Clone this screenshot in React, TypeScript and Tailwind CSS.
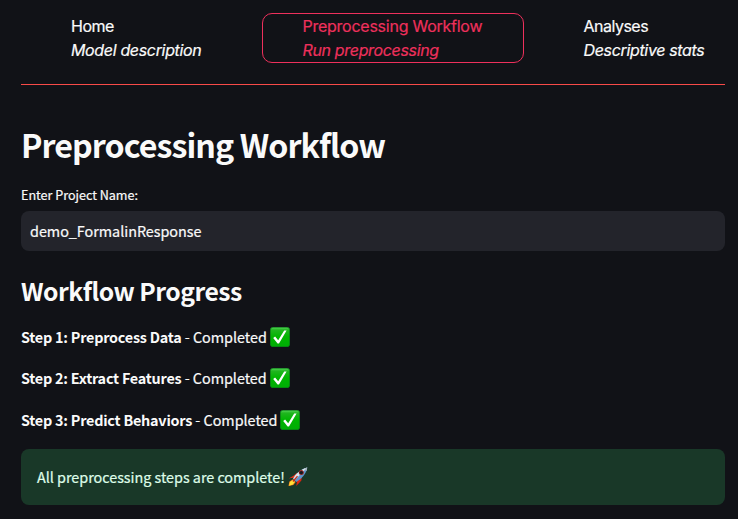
const sans = "font-['Noto_Sans_CJK_JP','Source_Sans_Pro',sans-serif]";

function CheckMark() {
  return (
    <svg viewBox="0 0 20 20" className="ml-[3px] h-5 w-5 shrink-0" aria-hidden="true">
      <defs>
        <linearGradient id="check-fill" x1="0" y1="0" x2="0" y2="1">
          <stop offset="0" stopColor="#5ad65c" />
          <stop offset="0.14" stopColor="#20b51f" />
          <stop offset="0.5" stopColor="#00b500" />
          <stop offset="1" stopColor="#00ad05" />
        </linearGradient>
      </defs>
      <rect x="0.3" y="0.3" width="19.4" height="19.4" rx="2.8" fill="url(#check-fill)" stroke="#078c17" strokeWidth="0.6" />
      <path d="M3.2 10.9 5.1 9.5 8.2 13.3 14.2 3.4 16.6 3.6 9 16.4H7.6Z" fill="#fff" />
    </svg>
  );
}

function Rocket() {
  return (
    <svg viewBox="0 0 20 20" className="ml-[3px] h-5 w-5 shrink-0" aria-hidden="true">
      <path d="M5.8 8.6 8.4 6.2 11 5.8 7 11.4 4.2 10.8.8 11.4Z" fill="#e83218" />
      <path d="M13.8 9.2 13.4 13.6 8.3 18.9 8.9 15 8.2 12.8Z" fill="#dc2412" />
      <path d="M5 12.2 1.4 14.4.5 19 5.4 18 7.6 15Z" fill="#f97a1c" />
      <path d="M4.9 12.9 1.9 15.1 1 18.7 4.8 17.5 6.6 14.9Z" fill="#ffe137" />
      <path d="M5.2 11.8C7.5 7.3 12 2.5 19.3.6 18.3 6.9 13.5 12.2 8.2 15Z" fill="#5e95cb" />
      <path d="M5.2 11.8C7.5 7.3 12 2.5 19.3.6L6.6 13.2Z" fill="#d9e6ee" />
      <path d="M16.3 1.7 19.3.6 18.5 4.2C17.8 3.7 16.8 2.7 16.3 1.7Z" fill="#a9b4bd" />
      <circle cx="13.3" cy="5.6" r="2.5" fill="#962820" />
      <circle cx="13.3" cy="5.6" r="1.7" fill="#141820" />
      <path d="M9.5 9.2 5 14.5" stroke="#c92c1c" strokeWidth="1.3" />
    </svg>
  );
}

function NavItem({ title, note, className, titleClass }: { title: string; note: string; className: string; titleClass: string }) {
  return (
    <a className={`block h-[50px] whitespace-nowrap rounded-[10px] border text-base leading-6 ${className}`}>
      <span className={`block ${titleClass}`}>{title}</span>
      <span className="block italic tracking-[-0.34px]">{note}</span>
    </a>
  );
}

const steps = [
  { label: "Step 1: Preprocess Data", className: "h-[41px]" },
  { label: "Step 2: Extract Features", className: "h-[42px]" },
  { label: "Step 3: Predict Behaviors", className: "h-[41px]" },
];

export default function App() {
  return (
    <main className={`h-[519px] w-[738px] overflow-hidden bg-[#111217] pl-[21px] pr-[13px] pt-[13px] text-[#fafafa] [-webkit-text-stroke:0.2px] ${sans}`}>
      <nav className="flex h-[72px] border-b border-[#f84a48] font-['Inter',sans-serif]">
        <NavItem title="Home" note="Model description" titleClass="tracking-[-0.5px]" className="ml-[9px] w-[213px] border-transparent pl-10" />
        <NavItem title="Preprocessing Workflow" note="Run preprocessing" titleClass="tracking-[-0.25px]" className="ml-[19px] w-[262px] border-[#ee305c] pl-[39.5px] text-[#ee305c]" />
        <NavItem title="Analyses" note="Descriptive stats" titleClass="tracking-[-0.5px]" className="ml-[19px] w-[181px] border-transparent pl-[39.5px]" />
      </nav>
      <h1 className="mt-[37px] h-[45px] whitespace-nowrap text-[32.2px] font-bold leading-[44px] tracking-[-0.94px] [-webkit-text-stroke:0]">Preprocessing Workflow</h1>
      <label className="mt-[18px] block h-5 whitespace-nowrap text-[12.6px] leading-5 tracking-[-0.02px]">Enter Project Name:</label>
      <div className="mt-[6px] flex h-10 items-center rounded-lg bg-[#23242b] pl-[9px] text-[14.4px] tracking-[-0.03px]">demo_FormalinResponse</div>
      <h2 className="mt-[21px] h-[37px] whitespace-nowrap text-[24.7px] font-bold leading-[36px] tracking-[-0.5px] [-webkit-text-stroke:0]">Workflow Progress</h2>
      <div className="mt-[18px]">
        {steps.map((s) => (
          <p key={s.label} className={`flex items-start whitespace-pre text-[14.4px] leading-5 ${s.className}`}>
            <strong className="tracking-[-0.23px] [-webkit-text-stroke:0]">{s.label}</strong>
            <span className="tracking-[-0.03px]"> - Completed</span>
            <CheckMark />
          </p>
        ))}
      </div>
      <div className="-mt-[2px] flex h-14 items-center rounded-lg bg-[#193828] pl-4 text-[14.4px] tracking-[-0.03px] text-[#dffde9]">
        <span>All preprocessing steps are complete!</span>
        <Rocket />
      </div>
    </main>
  );
}
